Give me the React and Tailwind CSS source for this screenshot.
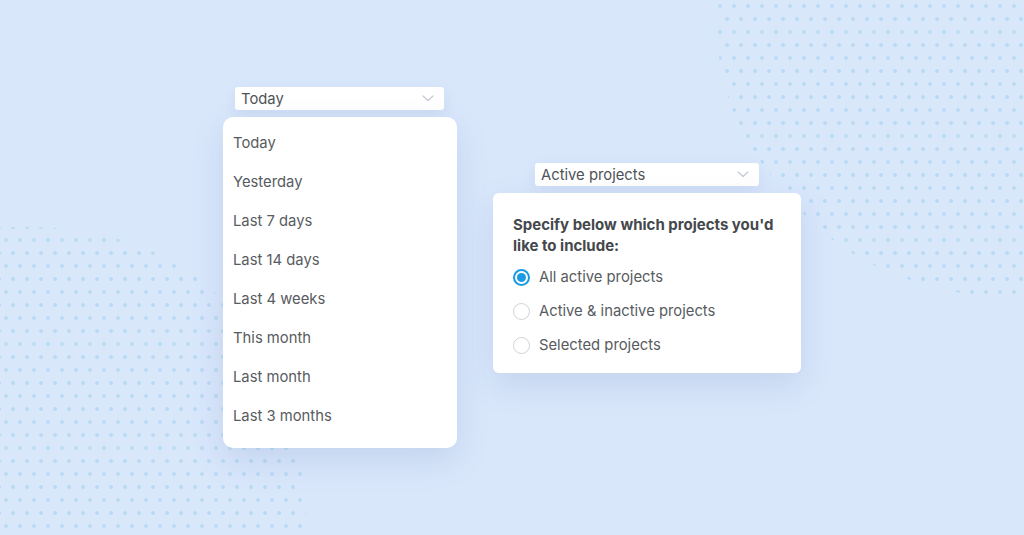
import { useState } from 'react'

const RANGES = ['Today', 'Yesterday', 'Last 7 days', 'Last 14 days', 'Last 4 weeks', 'This month', 'Last month', 'Last 3 months']
const PROJECT_OPTS = ['All active projects', 'Active & inactive projects', 'Selected projects']

const font = { fontFamily: 'Inter, "Noto Sans", sans-serif' }

function Chevron() {
  return (
    <svg width="12" height="7" viewBox="0 0 12 7" fill="none">
      <path d="M1 1l5 4.5L11 1" stroke="#c4c9d2" strokeWidth="1.2" strokeLinecap="round" strokeLinejoin="round" />
    </svg>
  )
}

function SelectBox({ label, className }) {
  return (
    <div className={`h-[23px] bg-white rounded-[3px] flex items-center justify-between pl-[6px] pr-[10px] shadow-[0_4px_14px_rgba(90,120,180,0.12)] ${className}`}>
      <span className="text-[14.8px] text-[#4f5358] leading-none pt-[1px]">{label}</span>
      <Chevron />
    </div>
  )
}

function Radio({ checked }) {
  return checked ? (
    <span className="w-[17px] h-[17px] rounded-full border-2 border-[#1b9be4] flex items-center justify-center shrink-0">
      <span className="w-[9px] h-[9px] rounded-full bg-[#1b9be4]" />
    </span>
  ) : (
    <span className="w-[17px] h-[17px] rounded-full border-[1.5px] border-[#cfd2d6] shrink-0" />
  )
}

// dotted blobs in the background
function Dots() {
  return (
    <svg className="absolute inset-0" width="1024" height="535" viewBox="0 0 1024 535">
      <defs>
        <pattern id="dots" x="0" y="0" width="14" height="26" patternUnits="userSpaceOnUse">
          <circle cx="6" cy="6" r="2" fill="#b9dbf5" />
          <circle cx="13" cy="19" r="2" fill="#b9dbf5" />
          <circle cx="-1" cy="19" r="2" fill="#b9dbf5" />
        </pattern>
      </defs>
      <path d="M718 0 C712 60 728 120 768 172 C818 240 880 292 1024 300 L1024 0 Z" fill="url(#dots)" />
      <path d="M-10 228 C90 220 185 248 232 312 C285 385 306 440 306 535 L-10 535 Z" fill="url(#dots)" />
    </svg>
  )
}

export default function App() {
  const [range] = useState('Today')
  const [proj, setProj] = useState(0)

  return (
    <div className="relative w-[1024px] h-[535px] overflow-hidden bg-[#d9e7fb]" style={font}>
      <Dots />

      <div className="relative flex items-start gap-[36px] pl-[223px] pt-[87px]">
        {/* date range */}
        <div className="flex flex-col">
          <SelectBox label={range} className="ml-[12px] w-[209px]" />
          <div className="mt-[7px] w-[234px] bg-white rounded-[10px] pt-[7px] pb-[12px] shadow-[0_12px_32px_rgba(80,110,170,0.16)]">
            {RANGES.map(r => (
              <div key={r} className="h-[39px] flex items-center pl-[10px] text-[14.8px] text-[#585b60]">{r}</div>
            ))}
          </div>
        </div>

        {/* projects */}
        <div className="flex flex-col mt-[76px]">
          <SelectBox label="Active projects" className="ml-[42px] w-[224px]" />
          <div className="mt-[7px] w-[308px] h-[180px] bg-white rounded-[6px] pt-[21px] px-[20px] shadow-[0_12px_32px_rgba(80,110,170,0.16)]">
            <p className="text-[15px] leading-[21px] font-bold text-[#45484c]">
              Specify below which projects you'd like to include:
            </p>
            <div className="mt-[4px]">
              {PROJECT_OPTS.map((o, i) => (
                <button key={o} onClick={() => setProj(i)} className="h-[34px] w-full flex items-center gap-[9px] text-left">
                  <Radio checked={proj === i} />
                  <span className="text-[14.8px] text-[#585b60]">{o}</span>
                </button>
              ))}
            </div>
          </div>
        </div>
      </div>
    </div>
  )
}
